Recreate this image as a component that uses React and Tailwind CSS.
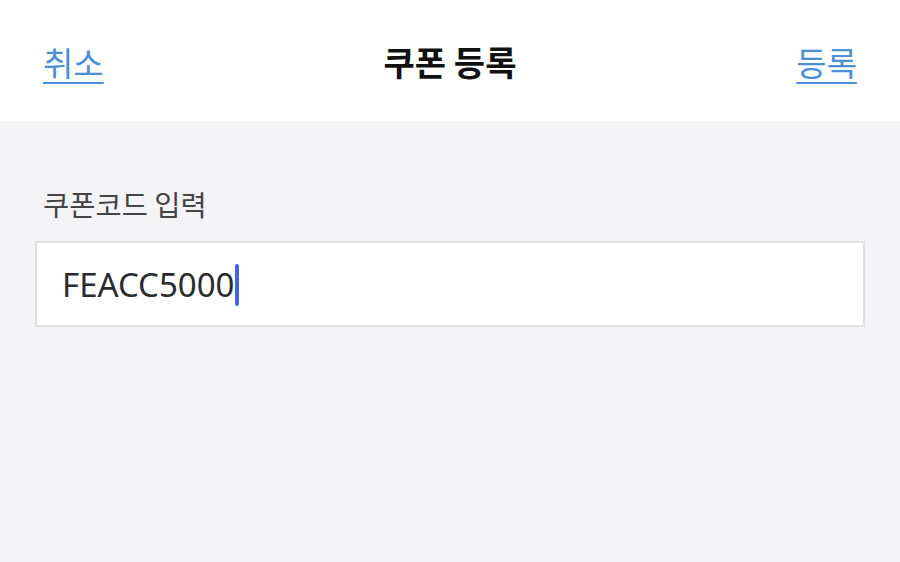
export default function App() {
  const ko = { fontFamily: '"Noto Sans CJK KR", "Noto Sans", sans-serif' };
  return (
    <div className="w-[900px] h-[562px] bg-[#f4f4f6] flex flex-col" style={ko}>
      <header className="h-[121px] bg-white flex items-center justify-between px-[43px] pt-[3px] shrink-0">
        <a className="text-[33px] leading-none text-[#4a90d9] underline underline-offset-[6px] decoration-[2px] cursor-pointer">취소</a>
        <h1 className="text-[34px] leading-none font-bold text-[#111]">쿠폰 등록</h1>
        <a className="text-[33px] leading-none text-[#4a90d9] underline underline-offset-[6px] decoration-[2px] cursor-pointer">등록</a>
      </header>
      <main className="px-[35px] pt-[69px]">
        <label className="block pl-[8px] text-[28.5px] leading-none text-[#444448] mb-[22px]">쿠폰코드 입력</label>
        <div className="h-[86px] bg-white border-2 border-[#e0e0e2] flex items-center pl-[25px] pt-[2px]">
          <span className="text-[33px] text-[#2b2b2f] leading-none" style={{ fontFamily: '"Noto Sans", sans-serif' }}>FEACC5000</span>
          <span className="w-[4px] h-[42px] bg-[#4466dd] rounded-full ml-[1px]"></span>
        </div>
      </main>
    </div>
  );
}
